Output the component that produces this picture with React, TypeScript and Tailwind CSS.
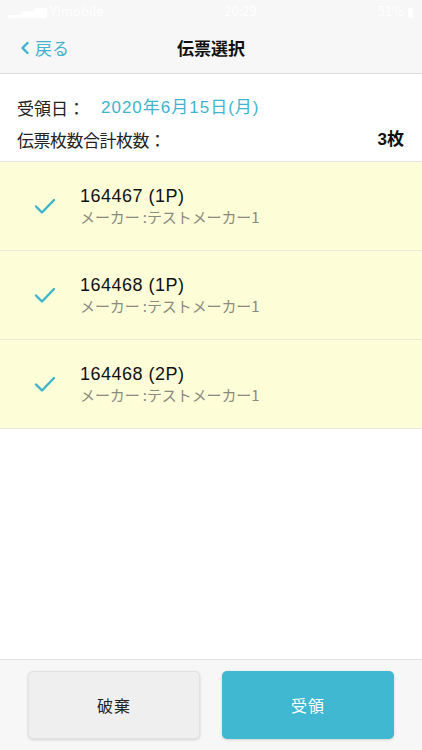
import React from "react";

const font = { fontFamily: '"Noto Sans CJK JP", "Noto Sans", sans-serif' };
const latin = { fontFamily: '"Liberation Sans", "Noto Sans CJK JP", sans-serif' };

function Check() {
  return (
    <svg width="22" height="18" viewBox="0 0 22 18" fill="none">
      <path d="M2 9.5 L8 15.5 L20 3" stroke="#3db4cc" strokeWidth="2.4" strokeLinecap="round" strokeLinejoin="round" />
    </svg>
  );
}

const rows = [
  { t: "164467 (1P)", s: "メーカー :テストメーカー1" },
  { t: "164468 (1P)", s: "メーカー :テストメーカー1" },
  { t: "164468 (2P)", s: "メーカー :テストメーカー1" },
];

export default function App() {
  return (
    <div className="w-[422px] h-[750px] flex flex-col bg-white overflow-hidden" style={font}>
      <div className="bg-[#f7f7f7] border-b border-[#dcdcdc] h-[74px] flex flex-col">
        <div className="h-[22px] flex items-center justify-between px-2 text-[13px] text-white">
          <span>▂▄▆ Y!mobile</span>
          <span>20:29</span>
          <span>51% ▮</span>
        </div>
        <div className="flex-1 relative flex items-center justify-center">
          <div className="absolute left-[20px] top-0 bottom-0 flex items-center gap-[5px] text-[#41b3cd] text-[17px]">
            <svg width="10" height="14" viewBox="0 0 10 14" fill="none">
              <path d="M7.5 2 L2.5 7 L7.5 12" stroke="#41b3cd" strokeWidth="2.4" strokeLinecap="round" strokeLinejoin="round" />
            </svg>
            <span>戻る</span>
          </div>
          <span className="text-[17px] font-bold text-[#111]">伝票選択</span>
        </div>
      </div>
      <div className="px-[17px] pt-[20px] pb-[6px] border-b border-[#e4e4e4]">
        <div className="flex items-center h-[28px] text-[17px]">
          <span className="w-[84px] text-[#222]">受領日：</span>
          <span className="text-[#40b4cc] tracking-[1px]" style={latin}>2020年6月15日(月)</span>
        </div>
        <div className="flex items-center justify-between h-[30px] mt-[3px] text-[17px]">
          <span className="text-[#222] tracking-[-0.5px]">伝票枚数合計枚数：</span>
          <span className="font-bold text-[#111] mr-[1px]" style={latin}>3枚</span>
        </div>
      </div>
      <div className="flex flex-col">
        {rows.map((r, i) => (
          <div key={i} className="h-[89px] bg-[#fdfdd7] border-b border-[#e8e8d8] flex items-center">
            <div className="w-[80px] flex justify-center pl-[10px]">
              <Check />
            </div>
            <div className="flex flex-col">
              <span className="text-[18px] text-[#111] leading-[22px] tracking-[0.5px]" style={latin}>{r.t}</span>
              <span className="text-[15px] text-[#8a8a80] leading-[20px] tracking-[-0.1px]">{r.s}</span>
            </div>
          </div>
        ))}
      </div>
      <div className="flex-1" />
      <div className="h-[91px] bg-[#f7f7f7] border-t border-[#e0e0e0] flex items-start gap-[22px] px-[28px] pt-[11px]">
        <button className="w-[172px] h-[68px] rounded-[5px] bg-[#efefef] border border-[#e2e2e2] shadow-[0_1px_3px_rgba(0,0,0,0.15)] text-[16px] text-[#222] tracking-[1px]">
          破棄
        </button>
        <button className="w-[172px] h-[68px] rounded-[5px] bg-[#41b8d1] shadow-[0_1px_3px_rgba(0,0,0,0.15)] text-[16px] text-white tracking-[1px]">
          受領
        </button>
      </div>
    </div>
  );
}
